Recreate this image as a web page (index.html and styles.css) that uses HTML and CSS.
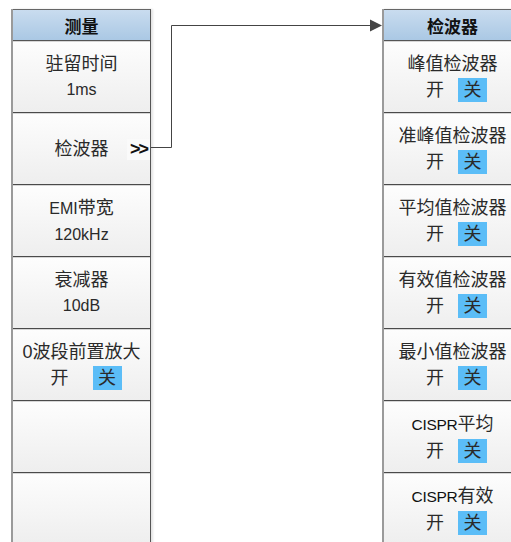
FILE: index.html
```html
<!DOCTYPE html>
<html lang="zh">
  <head>
    <meta charset="utf-8" />
    <title>测量 / 检波器</title>
    <link rel="stylesheet" href="styles.css">
  </head>
  <body>
    <div class="stage">
      <div class="panel">
        <div class="head">测量</div>
        <div class="key"><span>驻留时间</span><span class="val">1ms</span></div>
        <div class="key"><span>检波器</span><span class="more">&gt;&gt;</span></div>
        <div class="key"><span><span class="lat">EMI</span>带宽</span><span class="val">120kHz</span></div>
        <div class="key"><span>衰减器</span><span class="val">10dB</span></div>
        <div class="key"><span>0波段前置放大</span><span class="sw"><span>开</span><span class="on">关</span></span></div>
        <div class="key"></div>
        <div class="key"></div>
      </div>

      <div class="panel right">
        <div class="head">检波器</div>
        <div class="key"><span>峰值检波器</span><span class="sw"><span>开</span><span class="on">关</span></span></div>
        <div class="key"><span>准峰值检波器</span><span class="sw"><span>开</span><span class="on">关</span></span></div>
        <div class="key"><span>平均值检波器</span><span class="sw"><span>开</span><span class="on">关</span></span></div>
        <div class="key"><span>有效值检波器</span><span class="sw"><span>开</span><span class="on">关</span></span></div>
        <div class="key"><span>最小值检波器</span><span class="sw"><span>开</span><span class="on">关</span></span></div>
        <div class="key"><span><span class="lat cispr">CISPR</span>平均</span><span class="sw"><span>开</span><span class="on">关</span></span></div>
        <div class="key"><span><span class="lat cispr">CISPR</span>有效</span><span class="sw"><span>开</span><span class="on">关</span></span></div>
      </div>
    </div>

    <!-- connector from the 检波器 key to the submenu -->
    <svg class="link" width="511" height="542" viewBox="0 0 511 542">
      <path d="M151 147.5 H171.5 V25.5 H373" fill="none" stroke="#444" stroke-width="1" />
      <path d="M370 19.5 L382 25.5 L370 31.5 Z" fill="#444" />
    </svg>
  </body>
</html>
```

FILE: styles.css
```css
html, body {
  margin: 0;
  overflow: hidden;
}
body {
  width: 511px;
  height: 542px;
  position: relative;
  background: #fff;
  font-family: "Liberation Sans", "Noto Sans CJK SC", sans-serif;
  color: #2a2a2a;
}
.stage {
  display: flex;
  gap: 231px;
  padding: 9px 0 0 11px;
}
.panel {
  flex: none;
  width: 140px;
  box-sizing: border-box;
  border-left: 2px solid #9a9a9a;
  border-right: 1px solid #555;
  box-shadow: 2px 0 2px #e4e4e4;
}
.head {
  height: 32px;
  box-sizing: border-box;
  border-top: 1px solid #666;
  border-bottom: 1px solid #555;
  background: linear-gradient(#c9dcef, #aac8e4);
  font-family: "Noto Sans CJK SC", sans-serif;
  font-weight: 700;
  font-size: 17px;
  color: #111;
  display: flex;
  align-items: center;
  justify-content: center;
}
.key {
  position: relative;
  height: 72px;
  box-sizing: border-box;
  border-top: 1px solid #d6d6d6;
  border-bottom: 1px solid #4a4a4a;
  background: linear-gradient(#fdfdfd, #eeeeee);
  display: flex;
  flex-direction: column;
  align-items: center;
  justify-content: center;
  gap: 2px;
  font-size: 18px;
  line-height: 24px;
}
.key:first-of-type {
  border-top: none;
}
.val,
.lat {
  font-size: 16px;
}
.cispr {
  font-size: 15.5px;
  letter-spacing: -0.3px;
  color: #111;
}
.sw {
  display: flex;
  align-items: center;
  gap: 24px;
  padding-left: 9px;
}
.on {
  width: 29px;
  height: 24px;
  background: #5bbdf7;
  text-align: center;
}
.right .sw {
  gap: 14px;
  padding-left: 8px;
}
.more {
  position: absolute;
  right: 0;
  top: 25px;
  width: 23px;
  height: 21px;
  background: #fafafa;
  font-size: 18px;
  font-weight: 700;
  line-height: 21px;
  letter-spacing: -2px;
  color: #111;
  text-align: center;
}
.link {
  position: absolute;
  left: 0;
  top: 0;
  pointer-events: none;
}
```
